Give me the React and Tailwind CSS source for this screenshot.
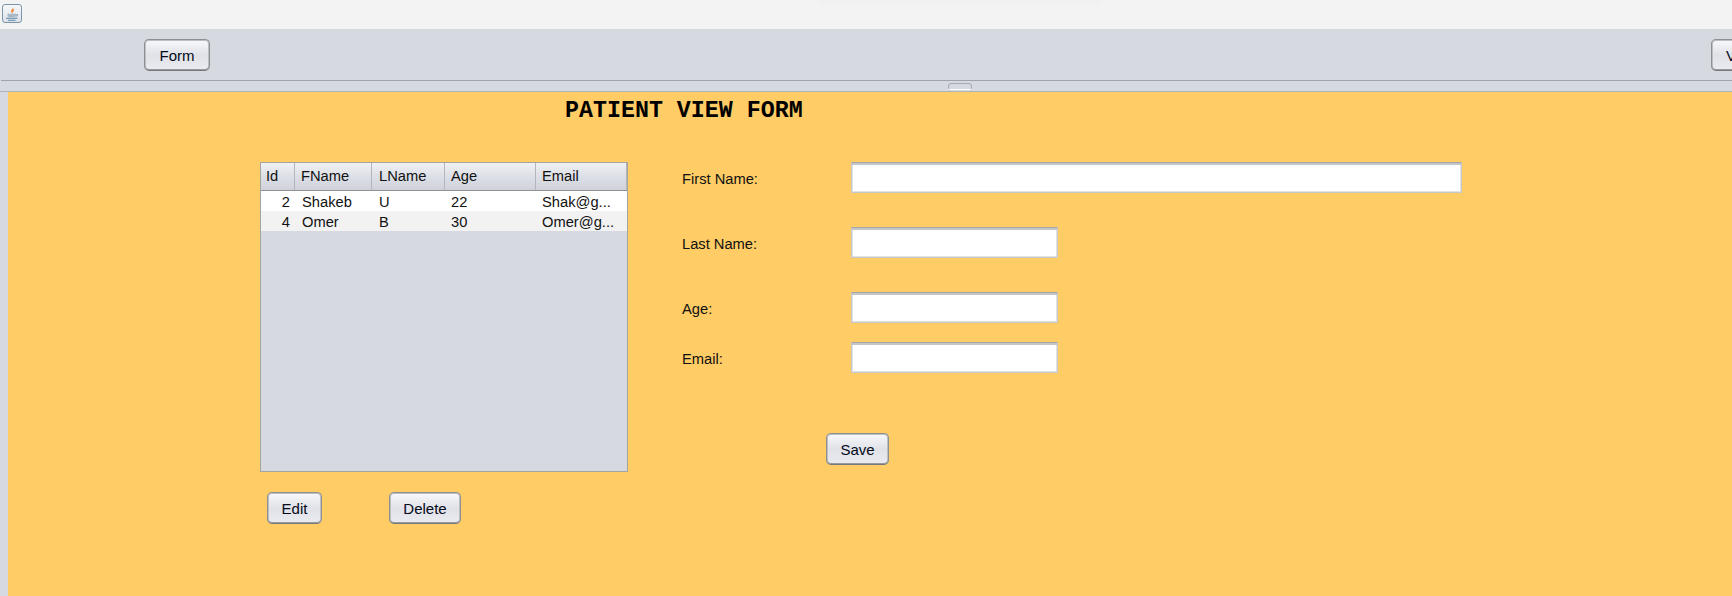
const columns = [
  { label: "Id", width: "w-[34px]", pad: "pl-[5px]" },
  { label: "FName", width: "w-[77px]", pad: "pl-[6px]" },
  { label: "LName", width: "w-[73px]", pad: "pl-[7px]" },
  { label: "Age", width: "w-[91px]", pad: "pl-[6px]" },
  { label: "Email", width: "flex-1", pad: "pl-[6px]" },
]

const patients = [
  { id: 2, first: "Shakeb", last: "U", age: 22, email: "Shak@g...", bg: "bg-white" },
  { id: 4, first: "Omer", last: "B", age: 30, email: "Omer@g...", bg: "bg-[#f2f2f2]" },
]

function JavaIcon() {
  return (
    <div className="flex h-[19px] w-[20px] items-center justify-center rounded-[3px] border border-[#7d93a8] bg-gradient-to-b from-[#f6f7f9] to-[#dde3ea]">
      <svg width="16" height="16" viewBox="0 0 16 16" fill="none">
        <path d="M8.800 1c1 1.700-2.600 2.800-1.400 5.200.3.500.8.900 1.300 1-.6-1.400 2.300-2.200 1.300-4.200-.4.600-.8.900-1.100 1 .5-1 .6-2-.1-3z" fill="#ee8a32" />
        <path d="M3.500 7.800h8.500v1.400c0 1.400-1 2.100-2 2.100H5.500c-1 0-2-.7-2-2.100z" fill="#a9b8c6" />
        <path d="M12 8.500h1.500v1.500H12" stroke="#7f99b0" strokeWidth="0.800" />
        <path d="M2 12.300h11.500M4 14.200h7.500" stroke="#5f87a8" strokeWidth="1.100" />
      </svg>
    </div>
  )
}

function SwingButton({ children, className = "" }) {
  return (
    <button
      className={`flex h-[32px] items-center justify-center rounded-[5px] border border-[#8d8f92] border-b-[#76787c] bg-gradient-to-b from-[#f8f9fb] via-[#e0e2e8] to-[#e9ebf1] pt-[2px] text-[15px] text-[#050a1a] shadow-[inset_0_-1px_0_#97999d,inset_0_0_0_1px_#bcbec2] ${className}`}
    >
      {children}
    </button>
  )
}

function Field({ label, width, className = "" }) {
  return (
    <div className={`flex items-center ${className}`}>
      <span className="w-[169px] pt-[4px] text-[14.7px] text-[#111]">{label}</span>
      <div
        className={`h-[31px] border border-[#c6c7c8] border-t-[#a3a5a7] bg-white shadow-[inset_0_2px_0_#c4c5c7,inset_0_0_0_1px_#e2e3e4] ${width}`}
      />
    </div>
  )
}

export default function App() {
  return (
    <div className="relative flex h-[596px] w-[1732px] flex-col overflow-hidden bg-[#d6d9e0] font-['Liberation_Sans',Arial,sans-serif]">
      <div className="relative flex h-[29px] shrink-0 items-start bg-[#f3f3f3] pl-[2px] pt-[4px]">
        <JavaIcon />
        <div className="absolute left-[820px] top-[-2px] h-[4px] w-[280px] bg-[#eeeeee] blur-[2px]" />
      </div>

      <div className="ml-px flex h-[52px] shrink-0 items-start justify-between border-b border-[#a0a3aa] pl-[143px] pt-[10px]">
        <SwingButton className="w-[66px]">Form</SwingButton>
        <SwingButton className="mr-[-40px] w-[61px] !justify-start pl-[14px]">V</SwingButton>
      </div>

      <div className="flex h-[11px] shrink-0 justify-center border-b border-[#b0b3b9] pl-[187px]">
        <div className="mt-[2px] h-[7px] w-[24px] rounded-[4px] border border-[#a6a9b0] border-b-white bg-[#d6d9e0]" />
      </div>

      <div className="ml-[8px] flex-1 bg-[#ffcc66]">
        <h1 className="ml-[557px] mt-[7px] h-[63px] font-['Liberation_Mono','Courier_New',monospace] text-[23.3px] font-bold leading-[24px] text-black">
          PATIENT VIEW FORM
        </h1>

        <div className="flex items-start">
          <div className="ml-[252px] w-[368px]">
            <div className="flex h-[310px] flex-col border border-[#a5a5a0] bg-[#d6d9e0]">
              <div className="flex h-[28px] shrink-0 border-b border-[#8e9095] bg-gradient-to-b from-[#f0f1f4] via-[#dcdfe6] to-[#cfd2da]">
                {columns.map((col) => (
                  <div
                    key={col.label}
                    className={`flex items-center border-r border-[#b2b5bc] text-[14.7px] text-[#111] ${col.width} ${col.pad}`}
                  >
                    {col.label}
                  </div>
                ))}
              </div>
              {patients.map((row) => (
                <div key={row.id} className={`flex h-[20px] items-center pt-[3px] text-[14.7px] text-[#111] ${row.bg}`}>
                  <span className="w-[34px] pr-[5px] text-right">{row.id}</span>
                  <span className="w-[77px] pl-[7px]">{row.first}</span>
                  <span className="w-[73px] pl-[7px]">{row.last}</span>
                  <span className="w-[91px] pl-[6px]">{row.age}</span>
                  <span className="flex-1 pl-[6px]">{row.email}</span>
                </div>
              ))}
            </div>
            <div className="mt-[20px] flex pl-[7px]">
              <SwingButton className="w-[55px]">Edit</SwingButton>
              <SwingButton className="ml-[67px] w-[72px]">Delete</SwingButton>
            </div>
          </div>

          <div className="ml-[54px]">
            <Field label="First Name:" width="w-[611px]" />
            <Field label="Last Name:" width="w-[207px]" className="mt-[34px]" />
            <Field label="Age:" width="w-[207px]" className="mt-[34px]" />
            <Field label="Email:" width="w-[207px]" className="mt-[19px]" />
            <SwingButton className="ml-[144px] mt-[60px] w-[63px]">Save</SwingButton>
          </div>
        </div>
      </div>
    </div>
  )
}
